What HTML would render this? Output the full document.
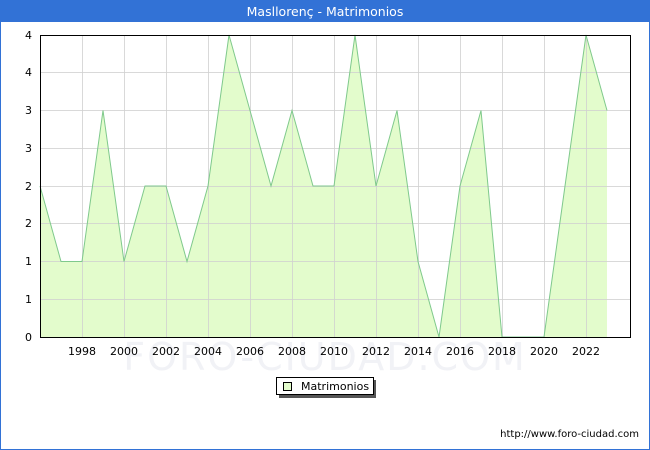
<!DOCTYPE html>
<html><head><meta charset="utf-8"><style>
html,body{margin:0;padding:0;background:#fff}
svg{display:block;font-family:"DejaVu Sans","Liberation Sans",sans-serif}
</style></head><body>
<svg width="650" height="450" viewBox="0 0 650 450" xmlns="http://www.w3.org/2000/svg">
<rect x="0" y="0" width="650" height="450" fill="#fff"/>
<rect x="0.5" y="0.5" width="649" height="449" fill="none" stroke="#3272d6" stroke-width="1"/>
<rect x="0" y="0" width="650" height="22" fill="#3272d6"/>
<text x="325" y="16" fill="#fff" font-size="12.5" text-anchor="middle">Masllorenç - Matrimonios</text>
<text x="325" y="370" fill="#f1f2f6" font-size="38" text-anchor="middle" letter-spacing="2">FORO-CIUDAD.COM</text>
<polygon fill="#e3fccc" points="40,337 40,186 61,261.5 82,261.5 103,110.5 124,261.5 145,186 166,186 187,261.5 208,186 229,35 250,110.5 271,186 292,110.5 313,186 334,186 355,35 376,186 397,110.5 418,261.5 439,337 460,186 481,110.5 502,337 523,337 544,337 565,186 586,35 607,110.5 607,337"/>
<g stroke="#d0d0d0" stroke-width="1" stroke-opacity="0.8">
<line x1="40" y1="72.5" x2="631" y2="72.5"/><line x1="40" y1="110.5" x2="631" y2="110.5"/>
<line x1="40" y1="148.5" x2="631" y2="148.5"/><line x1="40" y1="186.5" x2="631" y2="186.5"/>
<line x1="40" y1="223.5" x2="631" y2="223.5"/><line x1="40" y1="261.5" x2="631" y2="261.5"/>
<line x1="40" y1="299.5" x2="631" y2="299.5"/>
<line x1="82.5" y1="35" x2="82.5" y2="337"/><line x1="124.5" y1="35" x2="124.5" y2="337"/>
<line x1="166.5" y1="35" x2="166.5" y2="337"/><line x1="208.5" y1="35" x2="208.5" y2="337"/>
<line x1="250.5" y1="35" x2="250.5" y2="337"/><line x1="292.5" y1="35" x2="292.5" y2="337"/>
<line x1="334.5" y1="35" x2="334.5" y2="337"/><line x1="376.5" y1="35" x2="376.5" y2="337"/>
<line x1="418.5" y1="35" x2="418.5" y2="337"/><line x1="460.5" y1="35" x2="460.5" y2="337"/>
<line x1="502.5" y1="35" x2="502.5" y2="337"/><line x1="544.5" y1="35" x2="544.5" y2="337"/>
<line x1="586.5" y1="35" x2="586.5" y2="337"/>
</g>
<polyline fill="none" stroke="#7fc98c" stroke-width="1" points="40,186 61,261.5 82,261.5 103,110.5 124,261.5 145,186 166,186 187,261.5 208,186 229,35 250,110.5 271,186 292,110.5 313,186 334,186 355,35 376,186 397,110.5 418,261.5 439,337 460,186 481,110.5 502,337 523,337 544,337 565,186 586,35 607,110.5"/>
<rect x="40.5" y="35.5" width="590" height="302" fill="none" stroke="#000" stroke-width="1"/>
<g font-size="11" fill="#000" text-anchor="end">
<text x="32" y="341">0</text><text x="32" y="303">1</text><text x="32" y="265">1</text>
<text x="32" y="227">2</text><text x="32" y="190">2</text><text x="32" y="152">3</text>
<text x="32" y="114">3</text><text x="32" y="76">4</text><text x="32" y="39">4</text>
</g>
<g font-size="11" fill="#000" text-anchor="middle">
<text x="82" y="355">1998</text><text x="124" y="355">2000</text><text x="166" y="355">2002</text>
<text x="208" y="355">2004</text><text x="250" y="355">2006</text><text x="292" y="355">2008</text>
<text x="334" y="355">2010</text><text x="376" y="355">2012</text><text x="418" y="355">2014</text>
<text x="460" y="355">2016</text><text x="502" y="355">2018</text><text x="544" y="355">2020</text>
<text x="586" y="355">2022</text>
</g>
<rect x="279" y="380" width="97" height="18" fill="#555"/>
<rect x="276.5" y="377.5" width="97" height="17" fill="#fff" stroke="#000" stroke-width="1"/>
<rect x="283.5" y="382.5" width="8" height="8" fill="#e3fccc" stroke="#000" stroke-width="1"/>
<text x="301" y="390" font-size="11" fill="#000">Matrimonios</text>
<text x="639" y="437" font-size="10" fill="#000" text-anchor="end">http://www.foro-ciudad.com</text>
</svg>
</body></html>
